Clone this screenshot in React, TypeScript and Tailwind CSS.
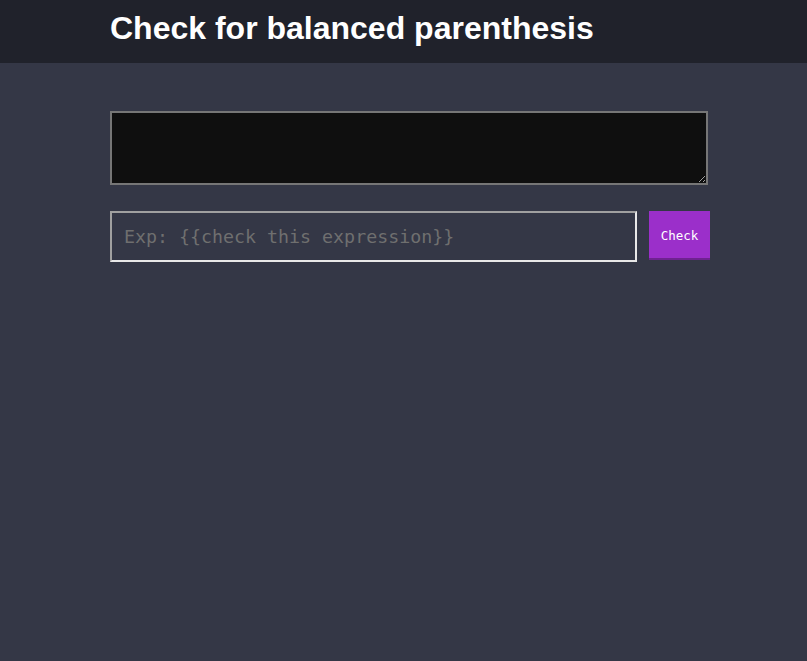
export default function App() {
  return (
    <div className="w-full min-h-[661px] bg-[#343746] font-['Liberation_Sans',Arial,sans-serif]">
      <header className="h-[63px] bg-[#20222b]">
        <div className="w-[600px] ml-[110px] pt-[10px]">
          <h1 className="text-[32px] leading-[36px] font-bold text-white">Check for balanced parenthesis</h1>
        </div>
      </header>
      <main className="w-[600px] ml-[110px] pt-[48px] flex flex-col gap-[26px]">
        <textarea className="block w-[598px] h-[74px] bg-[#0f0f0f] border-2 border-[#767676] text-white resize-y"></textarea>
        <div className="flex items-start gap-3">
          <input
            type="text"
            placeholder="Exp: {{check this expression}}"
            className="w-[527px] h-[51px] bg-transparent border-2 border-t-[#a0a0a0] border-l-[#a0a0a0] border-r-[#e8e8e8] border-b-[#e8e8e8] px-[12px] text-[18.3px] text-white placeholder:text-[#6f6f6f] font-['DejaVu_Sans_Mono',monospace] outline-none"
          />
          <button className="w-[61px] h-[49px] flex items-center justify-center pt-[3px] bg-[#9b2fca] border-b-2 border-[#6e2290] text-white text-[12.5px] font-['DejaVu_Sans_Mono',monospace]">
            Check
          </button>
        </div>
      </main>
    </div>
  );
}
